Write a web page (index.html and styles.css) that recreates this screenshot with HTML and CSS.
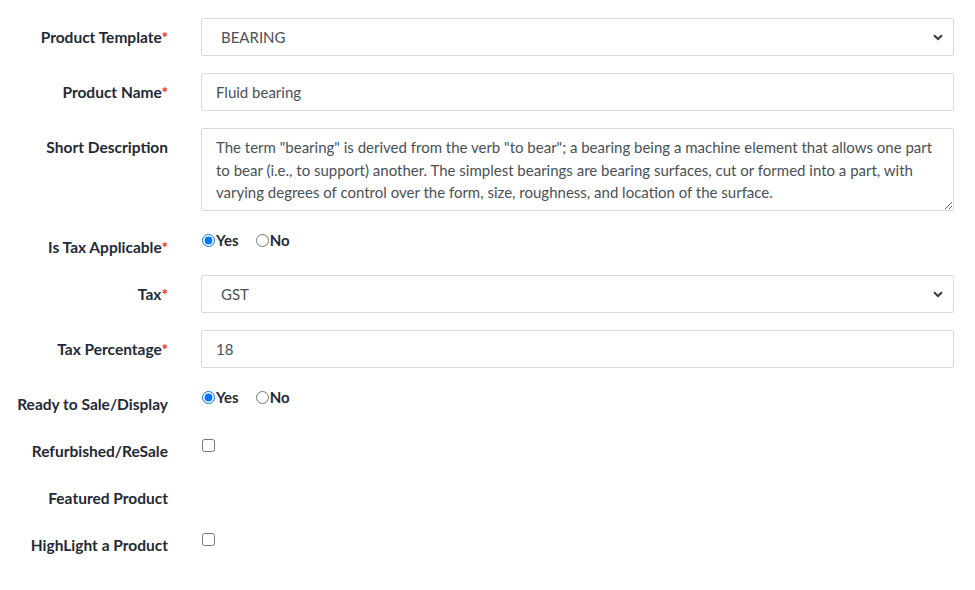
FILE: index.html
```html
<!DOCTYPE html>
<html lang="en">
<head>
    <meta charset="UTF-8">
    <meta name="viewport" content="width=device-width, initial-scale=1.0">
    <title>Product Details</title>
    <link rel="stylesheet" href="styles.css">
</head>
<body>
    <form class="product-form">
        <div class="form-row">
            <label class="form-label">Product Template<span class="req">*</span></label>
            <div class="select-wrap">
                <select class="form-control">
                    <option>BEARING</option>
                </select>
                <svg class="chevron" width="10" height="7" viewBox="0 0 10 7"><path d="M1 1.2 L5 5 L9 1.2" fill="none" stroke="#343a40" stroke-width="2"/></svg>
            </div>
        </div>

        <div class="form-row">
            <label class="form-label">Product Name<span class="req">*</span></label>
            <input type="text" class="form-control" value="Fluid bearing">
        </div>

        <div class="form-row">
            <label class="form-label">Short Description</label>
            <textarea class="form-control desc" rows="3">The term "bearing" is derived from the verb "to bear"; a bearing being a machine element that allows one part to bear (i.e., to support) another. The simplest bearings are bearing surfaces, cut or formed into a part, with varying degrees of control over the form, size, roughness, and location of the surface.</textarea>
        </div>

        <div class="form-row short">
            <label class="form-label">Is Tax Applicable<span class="req">*</span></label>
            <div class="choice-group">
                <label class="choice"><input type="radio" name="tax" checked>Yes</label>
                <label class="choice"><input type="radio" name="tax">No</label>
            </div>
        </div>

        <div class="form-row">
            <label class="form-label">Tax<span class="req">*</span></label>
            <div class="select-wrap">
                <select class="form-control">
                    <option>GST</option>
                </select>
                <svg class="chevron" width="10" height="7" viewBox="0 0 10 7"><path d="M1 1.2 L5 5 L9 1.2" fill="none" stroke="#343a40" stroke-width="2"/></svg>
            </div>
        </div>

        <div class="form-row">
            <label class="form-label">Tax Percentage<span class="req">*</span></label>
            <input type="text" class="form-control" value="18">
        </div>

        <div class="form-row short">
            <label class="form-label">Ready to Sale/Display</label>
            <div class="choice-group">
                <label class="choice"><input type="radio" name="sale" checked>Yes</label>
                <label class="choice"><input type="radio" name="sale">No</label>
            </div>
        </div>

        <div class="form-row short">
            <label class="form-label">Refurbished/ReSale</label>
            <div class="check-box"><input type="checkbox"></div>
        </div>

        <div class="form-row short">
            <label class="form-label">Featured Product</label>
            <div></div>
        </div>

        <div class="form-row short">
            <label class="form-label">HighLight a Product</label>
            <div class="check-box"><input type="checkbox"></div>
        </div>
    </form>
</body>
</html>
```

FILE: styles.css
```css
body {
    margin: 0;
    background-color: #fff;
    font-family: 'Lato', sans-serif;
    font-size: 15px;
    color: #212529;
}

.product-form {
    padding: 18px 21px 0 0;
}

.form-row {
    display: grid;
    grid-template-columns: 168px 1fr;
    column-gap: 33px;
    margin-bottom: 17px;
}

.form-row.short {
    min-height: 30px;
}

.form-label {
    text-align: right;
    font-size: 15.5px;
    font-weight: 700;
    color: #1f2a37;
    padding-top: 8px;
    line-height: 22px;
}

.req {
    color: #e3342f;
}

.form-control {
    display: block;
    width: 100%;
    box-sizing: border-box;
    height: 38px;
    padding: 0 14px;
    font-family: inherit;
    font-size: 15px;
    color: #495057;
    background-color: #fff;
    border: 1px solid #d6dae2;
    border-radius: 2px;
    outline: none;
}

.select-wrap {
    position: relative;
}

.select-wrap select {
    appearance: none;
    -webkit-appearance: none;
    padding-left: 19px;
}

.chevron {
    position: absolute;
    right: 11px;
    top: 16px;
    pointer-events: none;
}

.desc {
    height: 83px;
    padding: 7px 14px;
    line-height: 22.5px;
    resize: vertical;
}

.choice-group {
    display: flex;
    gap: 16px;
    padding-top: 1px;
}

.choice {
    display: flex;
    align-items: center;
    align-self: flex-start;
    font-weight: 700;
    color: #1f2a37;
    line-height: 22px;
}

.choice input {
    margin: 0 1px;
    width: 13px;
    height: 13px;
}

.check-box {
    padding-top: 5px;
}

.check-box input {
    margin: 0 0 0 1px;
    width: 13px;
    height: 13px;
}
```
